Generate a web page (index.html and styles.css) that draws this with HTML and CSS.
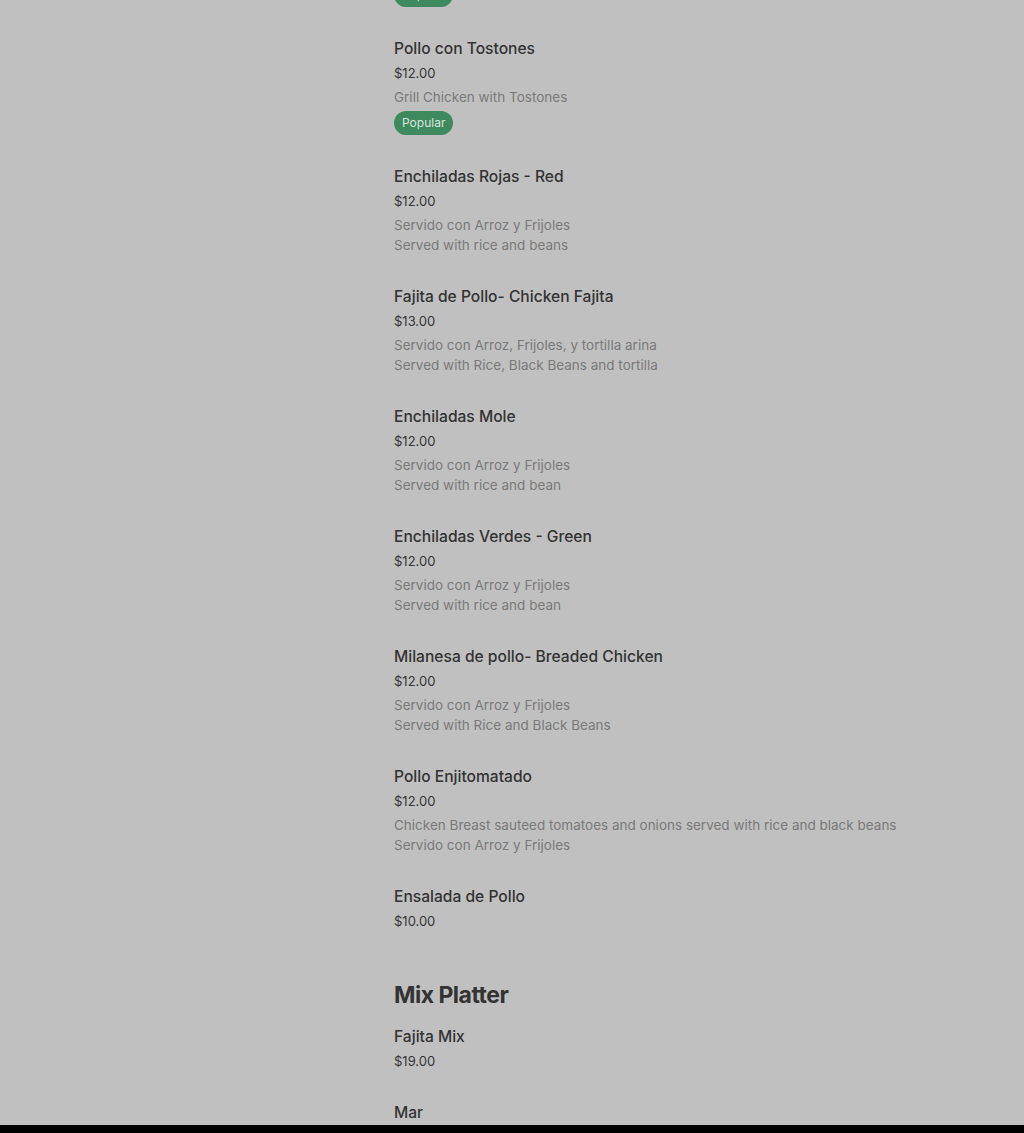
FILE: index.html
```html
<!DOCTYPE html>
<html lang="en">
<head>
    <meta charset="UTF-8">
    <meta name="viewport" content="width=device-width, initial-scale=1.0">
    <title>Menu</title>
    <link rel="stylesheet" href="styles.css">
</head>
<body>
    <div class="page">
        <div class="layout">
            <aside class="side"></aside>
            <main class="menu">
                <!-- tail of the item scrolled above the fold -->
                <div class="item">
                    <span class="badge">Popular</span>
                </div>
                <div class="item">
                    <h3>Pollo con Tostones</h3>
                    <p class="price">$12.00</p>
                    <p class="desc">Grill Chicken with Tostones</p>
                    <span class="badge">Popular</span>
                </div>
                <div class="item">
                    <h3>Enchiladas Rojas - Red</h3>
                    <p class="price">$12.00</p>
                    <p class="desc">Servido con Arroz y Frijoles<br>Served with rice and beans</p>
                </div>
                <div class="item">
                    <h3>Fajita de Pollo- Chicken Fajita</h3>
                    <p class="price">$13.00</p>
                    <p class="desc">Servido con Arroz, Frijoles, y tortilla arina<br>Served with Rice, Black Beans and tortilla</p>
                </div>
                <div class="item">
                    <h3>Enchiladas Mole</h3>
                    <p class="price">$12.00</p>
                    <p class="desc">Servido con Arroz y Frijoles<br>Served with rice and bean</p>
                </div>
                <div class="item">
                    <h3>Enchiladas Verdes - Green</h3>
                    <p class="price">$12.00</p>
                    <p class="desc">Servido con Arroz y Frijoles<br>Served with rice and bean</p>
                </div>
                <div class="item">
                    <h3>Milanesa de pollo- Breaded Chicken</h3>
                    <p class="price">$12.00</p>
                    <p class="desc">Servido con Arroz y Frijoles<br>Served with Rice and Black Beans</p>
                </div>
                <div class="item">
                    <h3>Pollo Enjitomatado</h3>
                    <p class="price">$12.00</p>
                    <p class="desc">Chicken Breast sauteed tomatoes and onions served with rice and black beans<br>Servido con Arroz y Frijoles</p>
                </div>
                <div class="item">
                    <h3>Ensalada de Pollo</h3>
                    <p class="price">$10.00</p>
                </div>

                <h2 class="section">Mix Platter</h2>
                <div class="item">
                    <h3>Fajita Mix</h3>
                    <p class="price">$19.00</p>
                </div>
                <div class="item">
                    <h3>Mar</h3>
                </div>
            </main>
        </div>
        <div class="bottom-bar"></div>
    </div>
</body>
</html>
```

FILE: styles.css
```css
html, body {
    margin: 0;
    padding: 0;
}
body {
    font-family: Inter, "Noto Sans", sans-serif;
    background: #c0c0c0;
    color: #333;
}
.page {
    height: 1133px;
    display: flex;
    flex-direction: column;
    overflow: hidden;
}
.layout {
    flex: 1;
    overflow: hidden;
    display: grid;
    grid-template-columns: 394px 1fr;
}
.menu {
    margin-top: -21px;
}
.item {
    padding-bottom: 29px;
}
.item h3 {
    margin: 0;
    padding-top: 1px;
    font-size: 15.6px;
    font-weight: 500;
    line-height: 24px;
    color: #333;
}
.price {
    margin: 2px 0 0;
    font-size: 13px;
    line-height: 20px;
    color: #363636;
}
.desc {
    margin: 4px 0 0;
    font-size: 13.5px;
    line-height: 20px;
    color: #7a7a7a;
}
.badge {
    display: inline-block;
    margin-top: 4px;
    padding: 0 8px;
    height: 24px;
    line-height: 24px;
    border-radius: 12px;
    background: #3e8a5e;
    color: #d6e6dc;
    font-size: 12px;
}
.section {
    margin: 19px 0 13px;
    font-size: 23px;
    line-height: 32px;
    font-weight: 700;
    letter-spacing: -0.5px;
    color: #333;
}
.bottom-bar {
    height: 8px;
    background: #000;
}
```
